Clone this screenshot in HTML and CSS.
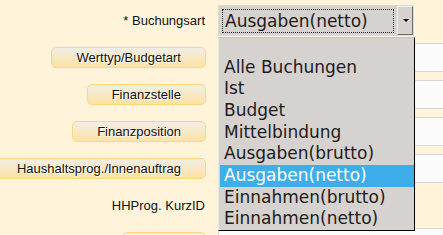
FILE: index.html
```html
<!DOCTYPE html>
<html lang="de">
<head>
    <meta charset="UTF-8">
    <title>Buchungen</title>
    <link rel="stylesheet" href="styles.css">
</head>
<body>
    <div class="form">
        <div class="row">
            <div class="label"><span class="label-text">* Buchungsart</span></div>
            <div class="field">
                <div class="select">
                    <div class="select-value">Ausgaben(netto)</div>
                    <div class="select-btn"><span class="arrow"></span></div>
                </div>
            </div>
        </div>
        <div class="row">
            <div class="label"><button class="lookup">Werttyp/Budgetart</button></div>
            <div class="field"><input type="text" class="text-input"></div>
        </div>
        <div class="row">
            <div class="label"><button class="lookup">Finanzstelle</button></div>
            <div class="field"><input type="text" class="text-input"></div>
        </div>
        <div class="row">
            <div class="label"><button class="lookup">Finanzposition</button></div>
            <div class="field"><input type="text" class="text-input"></div>
        </div>
        <div class="row">
            <div class="label"><button class="lookup">Haushaltsprog./Innenauftrag</button></div>
            <div class="field"><input type="text" class="text-input"></div>
        </div>
        <div class="row">
            <div class="label"><span class="label-text">HHProg. KurzID</span></div>
            <div class="field"><input type="text" class="text-input short"></div>
        </div>
        <div class="row">
            <div class="label"><button class="lookup">Konto</button></div>
            <div class="field"><input type="text" class="text-input"></div>
        </div>
    </div>

    <!-- open dropdown of the Buchungsart select -->
    <ul class="dropdown">
        <li class="option empty"></li>
        <li class="option">Alle Buchungen</li>
        <li class="option">Ist</li>
        <li class="option">Budget</li>
        <li class="option">Mittelbindung</li>
        <li class="option">Ausgaben(brutto)</li>
        <li class="option selected">Ausgaben(netto)</li>
        <li class="option">Einnahmen(brutto)</li>
        <li class="option">Einnahmen(netto)</li>
    </ul>
</body>
</html>
```

FILE: styles.css
```css
body {
    margin: 0;
    background: #fff4da;
    font-family: "Liberation Sans", Arial, sans-serif;
    font-size: 13px;
    color: #111;
    overflow: hidden;
}
.form {
    padding-top: 2px;
}
.row {
    display: flex;
    align-items: center;
    height: 37px;
}
.label {
    width: 206px;
    flex-shrink: 0;
    display: flex;
    justify-content: flex-end;
    white-space: nowrap;
}
.label-text {
    padding-right: 1px;
}
.field {
    margin-left: 12px;
    flex-shrink: 0;
}
.lookup {
    flex-shrink: 0;
    height: 21px;
    padding: 0 24px;
    border: 1px solid #fad67e;
    border-radius: 5px;
    background: linear-gradient(#f1eee7, #fde3a2);
    font-family: "Liberation Sans", Arial, sans-serif;
    font-size: 13px;
    color: #111;
    text-shadow: 1px 1px 0 #fff;
    white-space: nowrap;
}
.text-input {
    display: block;
    box-sizing: border-box;
    width: 300px;
    height: 29px;
    border: 1px solid #d6d6d6;
    background: #fbfbfc;
}
.text-input.short {
    width: 120px;
}
.select {
    display: flex;
    box-sizing: border-box;
    width: 196px;
    height: 31px;
    border: 1px solid #dddad6;
    background: #d6d2cf;
    font-family: "DejaVu Sans", sans-serif;
    font-size: 17px;
    color: #1e1c1b;
}
.select-value {
    flex: 1;
    margin: 3px 3px 2px 3px;
    padding-left: 2px;
    border: 1px dotted #222;
    line-height: 22px;
}
.select-btn {
    box-sizing: border-box;
    width: 16px;
    border: 1px solid;
    border-color: #f2f1ef #6e6c6a #6e6c6a #f2f1ef;
    display: flex;
    align-items: center;
    justify-content: center;
}
.arrow {
    width: 0;
    height: 0;
    border-left: 3px solid transparent;
    border-right: 3px solid transparent;
    border-top: 3px solid #000;
    margin-left: 1px;
}
.dropdown {
    position: absolute;
    left: 218px;
    top: 37px;
    width: 197px;
    box-sizing: border-box;
    margin: 0;
    padding: 0 0 0 1px;
    list-style: none;
    background: #d6d2cf;
    border-top: 1px solid #c4c0bc;
    border-left: 1px solid #ebe9e7;
    border-right: 1px solid #000;
    border-bottom: 1px solid #000;
    font-family: "DejaVu Sans", sans-serif;
    font-size: 17px;
    color: #1e1c1b;
}
.option {
    height: 21.7px;
    line-height: 21.7px;
    padding-left: 4px;
    white-space: nowrap;
}
.option.empty {
    height: 18.5px;
}
.option.selected {
    background: #3daee9;
    color: #fff;
}
```
